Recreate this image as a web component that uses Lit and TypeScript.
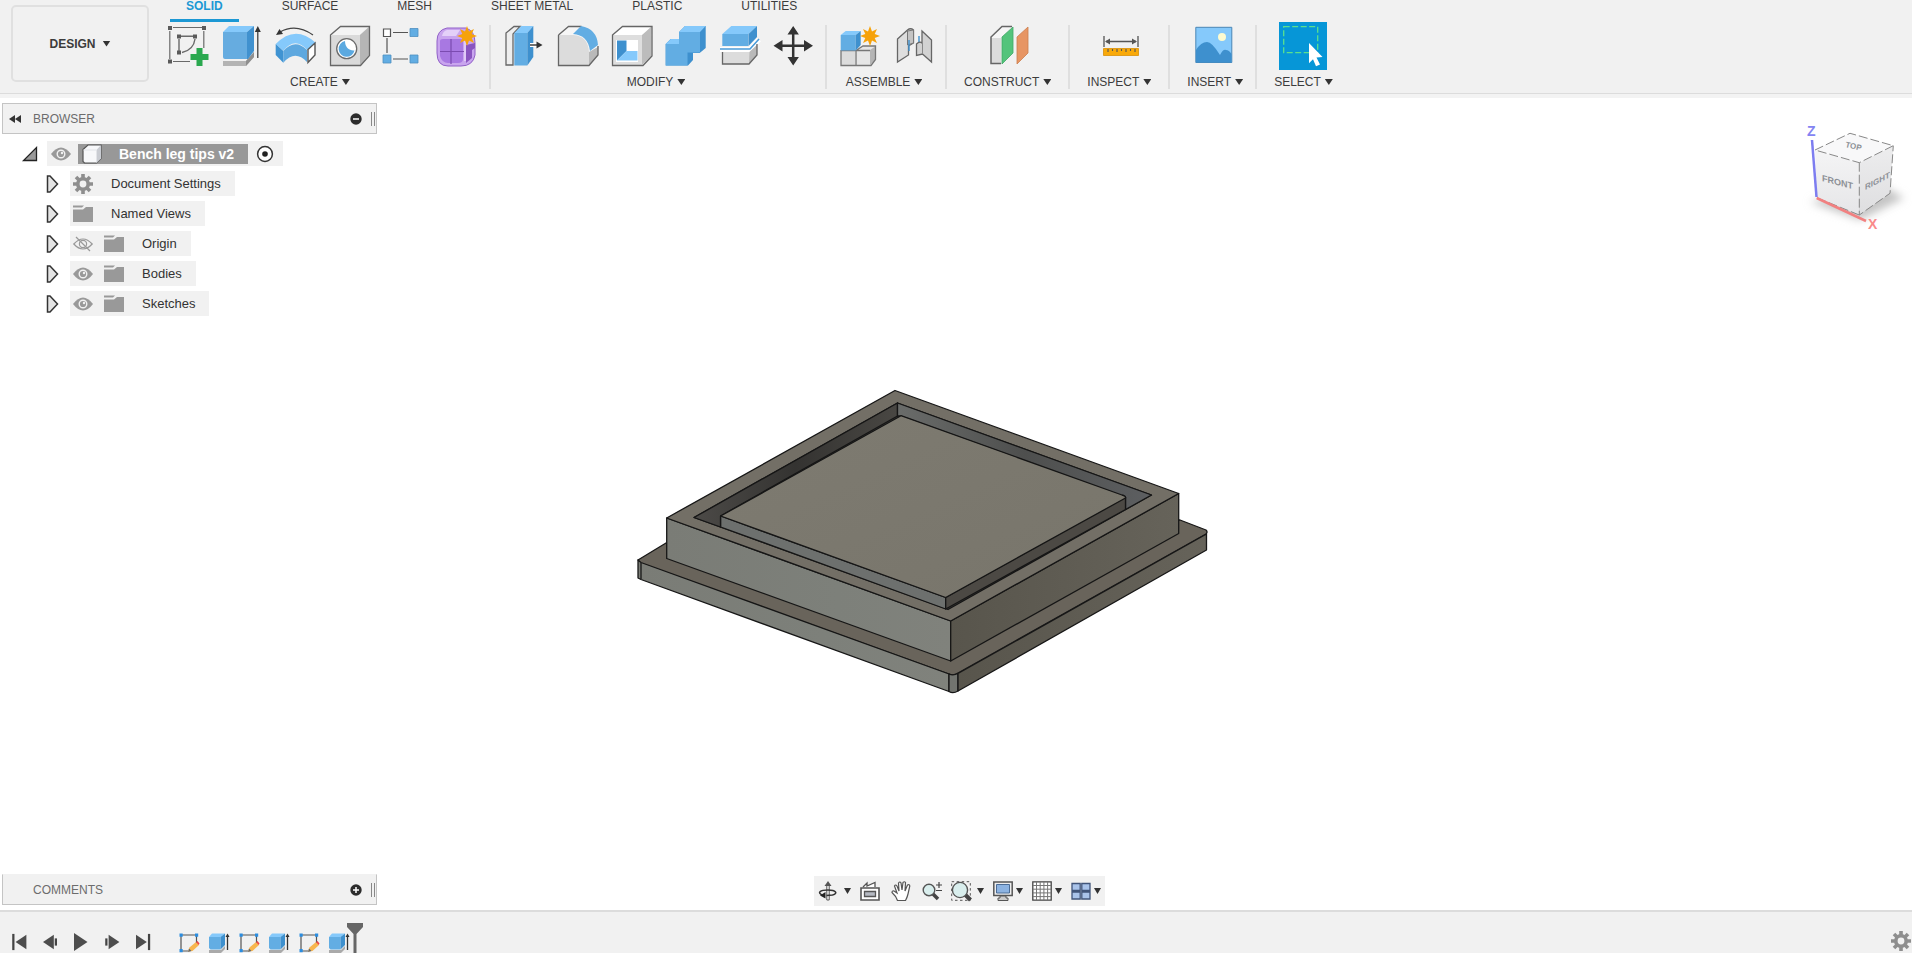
import { LitElement, html, svg, css, TemplateResult } from "lit";
import { customElement, property, state } from "lit/decorators.js";
import { classMap } from "lit/directives/class-map.js";

const STAR = "0,-10 2,-4.6 7,-7 4.7,-2 10,0 4.7,2 7,7 2,4.6 0,10 -2,4.6 -7,7 -4.7,2 -10,0 -4.7,-2 -7,-7 -2,-4.6";

/* 48 x 48 artwork for the ribbon commands */
const ribbonArt: Record<string, TemplateResult> = {
  sketch: svg`
    <path d="M9 5.5h29M5.8 9v28M39.8 9v17M9 39.5h17" stroke="#6a6a6a" stroke-width="1.2" fill="none"/>
    <path d="M17 14.3h12M15 17v12M31 17c-1 8-6 12-13 13.500" stroke="#6a6a6a" stroke-width="1.4" fill="none"/>
    <path d="M4 4h4v4h-4zM38 4h4v4h-4zM4 37.500h4v4h-4zM13 12.500h4v4h-4zM29 12.500h4v4h-4zM13 28.500h4v4h-4z" fill="#5a5a5a"/>
    <path d="M32.500 26h6v6h6v6h-6v6h-6v-6h-6v-6h6z" fill="#2aa84f"/>`,
  extrude: svg`
    <path d="M5 39h23l8-9v5l-8 9H5z" fill="#b4b4b4"/><path d="M28 39l8-9v5l-8 9z" fill="#8f8f8f"/>
    <path d="M5 10h24v27H7a2 2 0 0 1-2-2z" fill="#66ace0"/>
    <path d="M5 10l6-6h25l-7 6z" fill="#85c9fb"/><path d="M29 10l7-6v25l-6 8h-1z" fill="#4091cf"/>
    <path d="M39.800 8v28" stroke="#333" stroke-width="1.200"/><path d="M36.800 10l3-6 3 6z" fill="#333"/>`,
  revolve: svg`
    <path d="M3.700 22Q23 2 43.700 20.700L35.300 28Q23 14 11.300 28.700z" fill="#85c9fb"/>
    <path d="M3.700 22l7.600 7v11.700L3.700 33z" fill="#3f93d2"/>
    <path d="M11.300 29Q23 16 35 28v12Q23 27 11.300 40.700z" fill="#5ea8df"/>
    <path d="M36 27.500l7-6.500v12l-7 7.500z" fill="#fff" stroke="#555" stroke-width="1.400"/>
    <path d="M41 13Q24 1 8 10" fill="none" stroke="#444" stroke-width="1.300"/><path d="M4 13l3.500-6 3.500 5z" fill="#333"/>`,
  hole: svg`
    <path d="M4.500 15l10-10.500h29v29l-9 10H4.500z" fill="#dadada"/>
    <path d="M5 13l9.500-8.500H43L34 13z" fill="#f4f4f4"/><path d="M34 13l9-8v28l-9 10z" fill="#b5b5b5"/>
    <path d="M4.500 13l10-8.500h29v29l-9 10H4.500z" fill="none" stroke="#666" stroke-width="1.300"/>
    <circle cx="20.700" cy="26.700" r="10" fill="#fff" stroke="#6b6b6b" stroke-width="1.300"/>
    <path d="M19 19a8 8 0 1 0 9.500 9.500C23 29 19 25 19 19z" fill="#5ba9e0"/>`,
  pattern: svg`
    <path d="M13 10.500h15M7 16v15M13 37h15" stroke="#555" stroke-width="1.200"/>
    <path d="M3.500 7h7v7.500h-7z" fill="#fff" stroke="#555" stroke-width="1.200"/>
    <path d="M30 6.500h8v8h-8zM3 33h8v8H3zM30 33h8v8h-8z" fill="#62ade3" stroke="#4f8fc0" stroke-width=".8"/>`,
  form: svg`
    <path d="M13 6h19q9 3 9 15v12q-2 11-14 11H14Q3 44 3 31V19Q3 8 13 6z" fill="#c9a5ee" stroke="#9160c8"/>
    <path d="M32 23l9-2v5l-3 2v8l-6 5z" fill="#8a55c0"/>
    <path d="M6 19q0-2 3-2h17q3 0 3 3v17q0 4-5 4H14q-6 0-8-7z" fill="#a878e2"/>
    <path d="M17 17v25M6 29.500h24" fill="none" stroke="#7b4bb0" stroke-width="1.200"/>
    <path d="M31 19v20" stroke="#e0cbf7" stroke-width="2"/>
    <path d="M13 8h13l-4 6H8q1-5 5-6z" fill="#e4d0f8"/>
    <polygon points=${STAR} transform="translate(33 14)" fill="#f6a20a"/>`,
  press: svg`
    <path d="M6 11l8-6.500h6L13 12v31H6z" fill="#eee" stroke="#666" stroke-width="1.300"/>
    <path d="M14.300 11h13v32.500h-13z" fill="#62ade3"/><path d="M14.300 11l7-7h12l-6 7z" fill="#85c9fb"/>
    <path d="M27.300 11l6-7v31l-6 8.500z" fill="#3e90ce"/>
    <path d="M30 23h9" stroke="#fff" stroke-width="4"/><path d="M30 23h8" stroke="#333" stroke-width="1.400"/><path d="M36.500 19.500l6 3.500-6 3.500z" fill="#333"/>`,
  fillet: svg`
    <path d="M4.500 13l10-8.500h12Q42 8 44 25v8l-9 10.500H4.500z" fill="#f6f6f6"/>
    <path d="M4.500 13h15Q34 14 35 30v13.500H4.500z" fill="#dcdcdc"/><path d="M35 30l9-5v8l-9 10.500z" fill="#b9b9b9"/>
    <path d="M4.500 13l10-8.500h13M44 24v9l-9 10.500H4.500V13" fill="none" stroke="#666" stroke-width="1.300"/>
    <path d="M19 12l8-8Q43 7 44 23l-8 6Q34 13 19 12z" fill="#62ade3"/>`,
  shell: svg`
    <path d="M4.500 13l10-8.500H44V34l-9 9.500H4.500z" fill="#fff"/><path d="M34 13l9.500-8.500V34L34 43z" fill="#bcbcbc"/>
    <path d="M4.500 13H34v30H4.500z" fill="#dedede"/>
    <path d="M4.500 13l10-8.500H44V34l-9 9.500H4.500z" fill="none" stroke="#666" stroke-width="1.300"/>
    <path d="M8 18h22v22H8z" fill="#fff"/><path d="M9 18.500h9.500V29L9 38.500z" fill="#3e90ce"/><path d="M9 38.500l9.500-9.500h11v9.500z" fill="#85c9fb"/>`,
  combine: svg`
    <path d="M17 10l6-6h20.700v22l-6 5H31v7l-5 5.500H3.700V22l5-5H17z" fill="#3e90ce"/>
    <path d="M17 10h21v20.500H25.500v13H3.700V22H17z" fill="#62ade3"/>
    <path d="M17 10l6-6h20.700L38 10zM3.700 22l5-5H17v5z" fill="#85c9fb"/>`,
  split: svg`
    <path d="M6.300 12h26v12h-26z" fill="#62ade3"/><path d="M6.300 12l9-8H41l-8.500 8z" fill="#85c9fb"/><path d="M32.500 12L41 4v11l-8.500 9z" fill="#3e90ce"/>
    <path d="M4 27.500h30l9-10" fill="none" stroke="#fff" stroke-width="5"/><path d="M4 27h30l9-10" fill="none" stroke="#4a9bd8" stroke-width="1.600"/>
    <path d="M6.500 30h27l7.500-7v10l-8 9H6.500z" fill="#dcdcdc"/><path d="M33.500 30l7.500-7v10l-8 9z" fill="#b9b9b9"/>
    <path d="M6.500 30v12h26.500l8-9V22" fill="none" stroke="#666" stroke-width="1.300"/>`,
  move: svg`
    <path d="M23.200 8v31M8 23.700h31" stroke="#333" stroke-width="2.500"/>
    <path d="M17.500 12.500l5.700-8.500 5.700 8.500zM17.500 35l5.700 8.500 5.700-8.500zM12.500 18l-9 5.700 9 5.700zM34 18l9 5.700-9 5.700z" fill="#333"/>`,
  component: svg`
    <path d="M5 28h14v15.500H5z" fill="#dcdcdc"/><path d="M20 28l6-4h14v13l-5 6.500H20z" fill="#e6e6e6"/><path d="M34 28l6-4v13l-6 6z" fill="#b5b5b5"/>
    <path d="M5 28v15.500h30l4.500-6V24H27l-7 4.500v15M5 28.500h29" fill="none" stroke="#777" stroke-width="1.300"/>
    <path d="M4.700 13h15v15.500h-15z" fill="#62ade3"/><path d="M4.700 13l5-4h15l-5 4z" fill="#85c9fb"/><path d="M19.700 13l5-4v14l-5 5.500z" fill="#3e90ce"/>
    <polygon points=${STAR} transform="translate(34 14)" fill="#f6a20a"/>`,
  joint: svg`
    <path d="M7.500 17l10-9q3-2.500 6 0v13l-5 3v9L7.500 40z" fill="#dedede" stroke="#666" stroke-width="1.300"/>
    <path d="M17.500 9v14l6-2V8z" fill="#c4c4c4" stroke="#777"/>
    <path d="M19 18v11M29 14v9" stroke="#3e90ce" stroke-width="1.400"/>
    <path d="M32 9l9.500 9v22l-9-8-6 1.500V22q3-3 5.500-1z" fill="#d2d2d2" stroke="#666" stroke-width="1.300"/><path d="M32.500 21v11" stroke="#888"/>`,
  plane: svg`
    <path d="M7 16L18 4.500h10L17 15v26.500H7z" fill="#f6f6f6"/><path d="M7 16h10v25.500H7z" fill="#dcdcdc"/>
    <path d="M17 41.500H7V15L18 4.500h10" fill="none" stroke="#666" stroke-width="1.500"/>
    <path d="M18 15L29 5v26L18 42z" fill="#53c47b" stroke="#3fa865" stroke-width=".8"/><path d="M33 15L44 5v26L33 42z" fill="#e79563" stroke="#cc7e4e" stroke-width=".8"/>`,
  measure: svg`
    <path d="M9 14v11M43 14v11M11 19.500h30" stroke="#555" stroke-width="1.300"/><path d="M10 19.500l5-3v6zM42 19.500l-5-3v6z" fill="#555"/>
    <path d="M8.500 26.500h35v7h-35z" fill="#f9a909" stroke="#d98f06" stroke-width=".8"/>
    <path d="M13 27v3M17.500 27v2M22 27v3M26.500 27v2M31 27v3M35.500 27v2M40 27v3" stroke="#555" stroke-width="1.100"/>`,
  picture: svg`
    <path d="M4.800 5.300h36v35.200h-36z" fill="#85c9fb" stroke="#4a86b5"/><circle cx="31" cy="15" r="4" fill="#fdfbd0"/>
    <path d="M5 28q5-8 11-8 5 0 13 13 3-6 6-5 3 0 5.500 4v8.500H5z" fill="#3e90ce"/>`,
  select: svg`
    <path d="M0 0h48v48H0z" fill="#0696d7"/>
    <path d="M4.700 4.700h34v26h-34z" fill="none" stroke="#5be08e" stroke-width="1.300" stroke-dasharray="6 2.500"/>
    <path d="M30 21l13.500 14-6 .5 3.500 7-4 1.800-3-7-4 4z" fill="#fff"/>`,
};

/* 20 x 20 artwork for tree, navigation and timeline */
const smallArt: Record<string, TemplateResult> = {
  eye: svg`<path d="M0 10Q10-3 20 10 10 23 0 10z" fill="#999"/><circle cx="10" cy="10" r="3.800" fill="none" stroke="#f1f1f1" stroke-width="1.400"/><circle cx="11" cy="9" r="1.200" fill="#f1f1f1"/>`,
  eyeOff: svg`<path d="M.8 10Q10 0 19.200 10 10 20 .8 10z" fill="none" stroke="#999" stroke-width="1.200"/><circle cx="10" cy="10" r="3.600" fill="none" stroke="#999" stroke-width="1.200"/><path d="M3 3l14 14" stroke="#999" stroke-width="1.300"/>`,
  folder: svg`<path d="M0 3.500h9l2-2H0z" fill="#999"/><path d="M0 5.500h10l3-2.500h7v15H0z" fill="#999"/>`,
  gear: svg`<circle cx="10" cy="10" r="5.200" fill="none" stroke="#8e8e8e" stroke-width="3.600"/><path d="M10 0v4M10 16v4M0 10h4M16 10h4M3 3l3 3M14 14l3 3M17 3l-3 3M3 17l3-3" stroke="#8e8e8e" stroke-width="3.600"/>`,
  cube: svg`<path d="M1 5.500L6 1h13v13.500L14.500 19H2.500L1 17.500z" fill="#f7f8fa" stroke="#555" stroke-width="1.200"/><path d="M14.500 6L19 1v13.500L14.500 19z" fill="#c9ccd2"/><path d="M1.500 6h13v12.500" fill="none" stroke="#e2e4e8"/>`,
  target: svg`<circle cx="10" cy="10" r="7.400" fill="#fff" stroke="#333" stroke-width="1.500"/><circle cx="10" cy="10" r="2.800" fill="#222"/>`,
  open: svg`<path d="M3.500 16.500h13v-13z" fill="#999" stroke="#222" stroke-width="1.300"/>`,
  closed: svg`<path d="M5.500 2H8l7.500 8L8 18H5.500z" fill="#e4e4e4" stroke="#333" stroke-width="1.500"/>`,
  orbit: svg`<path d="M8.800 5v14h2.400V5" fill="#fff" stroke="#555" stroke-width="1"/><path d="M10 0l3.500 5h-7z" fill="#555"/><path d="M4 14C-1 11.500 2 9 10 9s10.500 3.500 4.500 5l-6 .5" fill="none" stroke="#333" stroke-width="1.500"/><path d="M2 14.500l5.500-3.500v6.500z" fill="#222"/>`,
  look: svg`<path d="M1 7h18v12H1z" fill="#fff" stroke="#555" stroke-width="1.600"/><path d="M4.500 10.500h11v5h-11z" fill="#b5b9c2" stroke="#555" stroke-width="1.300"/><path d="M3 6l4-4v3l8-3.500V6" fill="#fff" stroke="#555" stroke-width="1.300"/>`,
  hand: svg`<path d="M6.500 19.500Q5 15 1 11.500q0-2 2-1.500l3 2L3.500 5q1-2 2.500 0l2 5L7.500 2q1.500-2 2.500 0l1 7 1-7.500q1.500-1.500 2.500 0L14 10l2.500-6q2-1 2.300 1L17 13q-1 4-2.500 6.500z" fill="#fff" stroke="#555" stroke-width="1.200"/>`,
  zoom: svg`<path d="M10 12l6 6" stroke="#444" stroke-width="3.500"/><circle cx="7" cy="9" r="5.800" fill="#d9eeed" stroke="#555" stroke-width="1.400"/><path d="M14 4h6M17 1v6M14 9.500h6" stroke="#444" stroke-width="1.200"/>`,
  zoomWindow: svg`<path d="M.7.700h18.600v18.600H.7z" fill="none" stroke="#555" stroke-dasharray="2.500 2.500"/><path d="M14 13.500l5.500 5.500" stroke="#444" stroke-width="4"/><circle cx="9" cy="9" r="7.600" fill="#d9eeed" stroke="#555" stroke-width="1.400"/>`,
  display: svg`<path d="M0.800 1h18.400v13.500H.8z" fill="#eee" stroke="#555" stroke-width="1.500"/><path d="M3.500 3.500h13v8.500h-13z" fill="#8cb3e2" stroke="#4b6c96"/><path d="M7 15h6v2h2v2.500H5V17h2z" fill="#ccc" stroke="#555"/>`,
  grid: svg`<path d="M.8.800h18.400v18.400H.8z" fill="#fff" stroke="#444" stroke-width="1.300"/><path d="M4.500 1v18M8.200 1v18M11.900 1v18M15.600 1v18M1 4.500h18M1 8.200h18M1 11.900h18M1 15.600h18" stroke="#777" stroke-width="1"/>`,
  views: svg`<path d="M1 2.500h8.200v7H1zM10.800 2.500H19v7h-8.200zM1 11h8.200v7H1zM10.800 11H19v7h-8.200z" fill="#a9c3ea" stroke="#41557a" stroke-width="1.300"/>`,
  first: svg`<path d="M1.500 1v18" stroke="#444" stroke-width="2.500"/><path d="M16 2v16L4 10z" fill="#4d4d4d"/>`,
  back: svg`<path d="M12 2v16L0 10z" fill="#4d4d4d"/><path d="M14.300 6v8" stroke="#444" stroke-width="2.500"/>`,
  play: svg`<path d="M0 0v20l15-10z" fill="#4d4d4d"/>`,
  forward: svg`<path d="M4 2v16l12-8z" fill="#4d4d4d"/><path d="M1.500 6v8" stroke="#444" stroke-width="2.500"/>`,
  last: svg`<path d="M14.500 1v18" stroke="#444" stroke-width="2.500"/><path d="M0 2v16l12-8z" fill="#4d4d4d"/>`,
  tlSketch: svg`<path d="M3 2h14M2 3v14M17.500 3v8M3 18h6" stroke="#555" stroke-width="1.200"/><path d="M.5.500h3.200v3.200H.5zM16 .500h3.200v3.200H16zM.5 16h3.200v3.200H.5z" fill="#2b8de0"/><path d="M9 18.500l1.500-4L17 9l3 3-6.500 6z" fill="#f7b64e"/><path d="M17 9l1.500-1 2 2.500-1 1.500z" fill="#ee4444"/><path d="M9 19l1-3.500 2.500 2.500z" fill="#666"/>`,
  tlExtrude: svg`<path d="M0 17h12l4-4v3l-4 4H0z" fill="#aaa"/><path d="M0 4h11.500v12.500H1.500L0 15z" fill="#62ade3"/><path d="M0 4l3-3.500h13L11.500 4z" fill="#85c9fb"/><path d="M11.500 4L16 .5V12l-4.500 4.500z" fill="#3e90ce"/><path d="M18.500 3v14" stroke="#333" stroke-width="1.300"/><path d="M16.500 4l2-3.500 2 3.500z" fill="#333"/>`,
};

const small = (name: string) => html`<svg class="small" viewBox="0 0 20 20" aria-hidden="true">${smallArt[name]}</svg>`;

interface Group { label: string; icons: string[]; kind: string; }

const GROUPS: Group[] = [
  { label: "CREATE", icons: ["sketch", "extrude", "revolve", "hole", "pattern", "form"], kind: "wide" },
  { label: "MODIFY", icons: ["press", "fillet", "shell", "combine", "split", "move"], kind: "wide" },
  { label: "ASSEMBLE", icons: ["component", "joint"], kind: "wide" },
  { label: "CONSTRUCT", icons: ["plane"], kind: "single" },
  { label: "INSPECT", icons: ["measure"], kind: "single" },
  { label: "INSERT", icons: ["picture"], kind: "single snug" },
  { label: "SELECT", icons: ["select"], kind: "single final" },
];

const TABS = ["SOLID", "SURFACE", "MESH", "SHEET METAL", "PLASTIC", "UTILITIES"];

const shared = css`
  :host, * { box-sizing: border-box; }
  button {
    font: inherit; color: inherit; background: none; border: 0; padding: 0; margin: 0;
    display: flex; align-items: center; cursor: pointer;
  }
  svg { display: block; flex: none; overflow: visible; }
  .small { width: 20px; height: 20px; }
  .caret {
    width: 8px; height: 6px; flex: none; background: #333;
    clip-path: polygon(0 0, 100% 0, 50% 100%);
  }
`;

@customElement("cad-ribbon")
export class CadRibbon extends LitElement {
  @state() private tab = "SOLID";

  static styles = [shared, css`
    :host {
      display: flex; height: 98px; background: #f1f1f1; color: #3c3c3c;
      font-size: 12px; line-height: 14px; overflow: hidden;
      box-shadow: inset 0 -4px #f3f3f3, inset 0 -5px #dcdcdc;
    }
    .workspace {
      flex: none; width: 138px; height: 77px; margin: 5px 0 0 11px; justify-content: center; gap: 7px;
      border: 2px solid #e0e0e0; border-radius: 5px; font-weight: bold;
    }
    .main { margin-left: 6px; }
    .tabs { display: flex; gap: 27px; padding-left: 15px; height: 22px; }
    .tab { padding: 0 16px 8px; height: 22px; white-space: nowrap; border-bottom: 3px solid transparent; }
    .tab.active { font-weight: bold; color: #1c98d4; border-color: #1c98d4; }
    .groups { display: flex; }
    .group {
      display: flex; flex-direction: column; align-items: center; position: relative;
      padding: 0 6px 0 6px; gap: 5px;
    }
    .group::after { content: ""; position: absolute; right: 0; top: 3px; width: 2px; height: 64px; background: #dfdfdf; }
    .icons { display: flex; }
    .command { padding: 0 3px; }
    .command svg { width: 48px; height: 48px; }
    .single { padding: 0 19px 0 17px; }
    .snug { padding-right: 14px; }
    .final::after { display: none; }
    .label { gap: 4px; white-space: nowrap; }
    .wide .label { padding-right: 6px; }
  `];

  render() {
    return html`
      <button class="workspace">DESIGN <span class="caret"></span></button>
      <div class="main">
        <nav class="tabs">
          ${TABS.map((t) => html`<button class=${classMap({ tab: true, active: t === this.tab })}
            @click=${() => (this.tab = t)}>${t}</button>`)}
        </nav>
        <div class="groups">
          ${GROUPS.map((g) => html`
            <section class="group ${g.kind}">
              <div class="icons">
                ${g.icons.map((i) => html`<button class="command" aria-label=${i}>
                  <svg viewBox="0 0 48 48">${ribbonArt[i]}</svg></button>`)}
              </div>
              <button class="label">${g.label}<span class="caret"></span></button>
            </section>`)}
        </div>
      </div>`;
  }
}

@customElement("cad-panel-bar")
export class CadPanelBar extends LitElement {
  @property() label = "";
  @property({ type: Boolean }) expanded = false;

  static styles = [shared, css`
    :host {
      display: flex; align-items: center; height: 31px; padding: 0 1px 0 5px; background: #f1f1f1;
      border: 1px solid #c4c4c4; color: #6c6c6c; font-size: 12px; line-height: 14px;
    }
    :host(:not([expanded])) { border-top-color: #f1f1f1; }
    .rewind { width: 14px; height: 10px; }
    .rewind svg { width: 14px; height: 10px; }
    .title { flex: 1; padding-left: 11px; }
    .toggle svg { width: 12px; height: 12px; }
    .grip { width: 4px; height: 14px; margin-left: 9px; border: solid #888; border-width: 0 1px; }
  `];

  render() {
    return html`
      <button class="rewind" aria-label="Collapse">
        ${this.expanded ? html`<svg viewBox="0 0 14 10"><path d="M7 1v8L1 5zM13 1v8L7 5z" fill="#333"/></svg>` : ""}
      </button>
      <span class="title">${this.label}</span>
      <button class="toggle" aria-label="Toggle">
        <svg viewBox="0 0 12 12"><circle cx="6" cy="6" r="5.700" fill="#2c2c2c"/>
          <path d=${this.expanded ? "M3 6h6" : "M3 6h6M6 3v6"} stroke="#fff" stroke-width="1.500"/></svg>
      </button>
      <span class="grip"></span>`;
  }
}

interface Node { label: string; icons: string[]; }

const NODES: Node[] = [
  { label: "Document Settings", icons: ["gear"] },
  { label: "Named Views", icons: ["folder"] },
  { label: "Origin", icons: ["eyeOff", "folder"] },
  { label: "Bodies", icons: ["eye", "folder"] },
  { label: "Sketches", icons: ["eye", "folder"] },
];

@customElement("cad-browser")
export class CadBrowser extends LitElement {
  static styles = [shared, css`
    :host { display: block; }
    .tree { list-style: none; margin: 7px 0 0; padding: 0; display: grid; gap: 5px; font-size: 13px; line-height: 16px; color: #333; }
    .row { display: flex; align-items: center; height: 25px; padding-left: 40px; gap: 8px; }
    .row.root { padding-left: 18px; gap: 7px; }
    .item { display: flex; align-items: center; height: 25px; gap: 11px; padding: 0 14px 0 3px; background: #f1f1f1; }
    .root .item { padding: 0 8px 0 4px; gap: 7px; }
    .name { padding-left: 7px; }
    .chosen { height: 20px; padding: 0 14px 0 4px; gap: 10px; background: #989898; color: #fff; font-weight: bold; font-size: 14px; }
  `];

  render() {
    return html`
      <cad-panel-bar label="BROWSER" expanded></cad-panel-bar>
      <ul class="tree">
        <li class="row root">
          <button aria-label="Collapse">${small("open")}</button>
          <div class="item">
            <button aria-label="Visibility">${small("eye")}</button>
            <button class="chosen">${small("cube")}<span class="name">Bench leg tips v2</span></button>
            <button aria-label="Activate">${small("target")}</button>
          </div>
        </li>
        ${NODES.map((n) => html`
          <li class="row">
            <button aria-label="Expand">${small("closed")}</button>
            <div class="item">${n.icons.map((i) => small(i))}<span class="name">${n.label}</span></div>
          </li>`)}
      </ul>`;
  }
}

const NAV: { icon: string; menu: string }[] = [
  { icon: "orbit", menu: "far" },
  { icon: "look", menu: "" },
  { icon: "hand", menu: "" },
  { icon: "zoom", menu: "" },
  { icon: "zoomWindow", menu: "far" },
  { icon: "display", menu: "near" },
  { icon: "grid", menu: "near" },
  { icon: "views", menu: "near" },
];

@customElement("cad-viewport")
export class CadViewport extends LitElement {
  static styles = [shared, css`
    :host { display: flex; position: relative; min-height: 0; background: #fff; overflow: hidden; }
    .side { display: flex; flex-direction: column; justify-content: space-between; width: 375px; margin: 5px 0 5px 2px; }
    .model { position: absolute; left: calc(50% - 326px); top: 283px; width: 590px; height: 320px; }
    .viewcube { position: absolute; right: 2px; top: 20px; width: 110px; height: 114px; }
    .navbar {
      position: absolute; left: calc(50% - 142px); bottom: 4px; height: 30px; padding: 0 4px;
      display: flex; align-items: center; gap: 9px; background: #f1f1f1;
    }
    .hand { padding: 0 2px; }
    .far { gap: 6px; }
    .near { gap: 3px; }
    .navbar .caret { width: 7px; }
    .face { font: bold 9px "Liberation Sans", Arial, sans-serif; fill: #8c9096; }
    .face.side-face { font-size: 8px; }
    .axis { font: bold 14px "Liberation Sans", Arial, sans-serif; }
  `];

  private model() {
    return html`
      <svg class="model" viewBox="630 380 590 320" role="img" aria-label="Bench leg tip">
        <defs>
          <linearGradient id="front" x1="0" y1="0" x2="1" y2="0"><stop offset="0" stop-color="#7a7c76"/><stop offset=".6" stop-color="#7d807a"/><stop offset="1" stop-color="#80827c"/></linearGradient>
          <linearGradient id="right" x1="0" y1="0" x2="1" y2="0"><stop offset="0" stop-color="#58554c"/><stop offset="1" stop-color="#66635a"/></linearGradient>
          <linearGradient id="top" x1="0" y1="0" x2="1" y2="1"><stop offset="0" stop-color="#7e7b71"/><stop offset="1" stop-color="#78756b"/></linearGradient>
          <linearGradient id="wall" x1="0" y1="0" x2="1" y2="0"><stop offset="0" stop-color="#4c4a47"/><stop offset=".5" stop-color="#343331"/><stop offset="1" stop-color="#494743"/></linearGradient>
          <linearGradient id="back" x1="0" y1="0" x2="1" y2="0"><stop offset="0" stop-color="#6a6c6a"/><stop offset=".5" stop-color="#4e4f4e"/><stop offset="1" stop-color="#5d5f61"/></linearGradient>
        </defs>
        <g stroke="#161616" stroke-width="1.300" stroke-linejoin="round">
          <path d="M638 559L666 542 1180 519 1206 529Q1208 531 1206 533L958 672Q953 675 949 673L640 562z" fill="#69645b"/>
          <path d="M638 559L641 561.500 949 673V690.500L641 578.500 638 577z" fill="url(#front)"/>
          <path d="M949 673Q953 675 958 672.500V690Q953 693 949 690.500z" fill="#72746f"/>
          <path d="M958 672.500L1206.500 533V549L958 690z" fill="url(#right)"/>
          <path d="M641 562V578" fill="none"/>
          <path d="M666.700 517L950.700 620V660L666.700 557.500z" fill="url(#front)"/>
          <path d="M950.700 620L1178.700 492.500V532.500L950.700 660z" fill="url(#right)"/>
          <path d="M895 389.500L1178.700 492.500 950.700 620 666.700 517z" fill="#736f66"/>
          <path d="M897.500 402L1151.500 494 948 608.500 694 516.500z" fill="#3b3a37"/>
          <path d="M897.500 402V415L720.500 515V526L694 516.500z" fill="url(#wall)"/>
          <path d="M897.500 402L1151.500 494 1125.500 508.500V496L901 415H897.500z" fill="url(#back)"/>
          <path d="M720.700 515L945.700 596.500V608L720.700 526z" fill="#6d706e"/>
          <path d="M945.700 596.500L1125.500 496V508.500L945.700 608z" fill="#4c4944"/>
          <path d="M901 414.700L1122 494Q1126 495 1125.500 497L945.700 596.500 720.700 515z" fill="url(#top)"/>
        </g>
      </svg>`;
  }

  private viewcube() {
    return html`
      <svg class="viewcube" viewBox="0 0 110 114" role="img" aria-label="View cube">
        <defs>
          <filter id="soft" x="-20%" y="-20%" width="140%" height="140%"><feGaussianBlur stdDeviation="4"/></filter>
          <linearGradient id="cf" x1="0" y1="0" x2="0" y2="1"><stop offset="0" stop-color="#f4f4f5"/><stop offset="1" stop-color="#e6e6e8"/></linearGradient>
          <linearGradient id="cr" x1="0" y1="0" x2="0" y2="1"><stop offset="0" stop-color="#ededee"/><stop offset="1" stop-color="#dedee0"/></linearGradient>
        </defs>
        <path d="M10 84L60 102 104 80 80 66z" fill="#c4c4c4" filter="url(#soft)"/>
        <path d="M15 32L59.300 44.700V97L16.700 79.700z" fill="url(#cf)"/>
        <path d="M59.300 44.700L93.300 27.700 90 75.300 59.300 97z" fill="url(#cr)"/>
        <path d="M15 32L50 15.300 93.300 27.700 59.300 44.700z" fill="#f8f8f9"/>
        <path d="M15 32L50 15.300 93.300 27.700 59.300 44.700zM59.300 44.700V97L90 75.300 93.300 27.700M59.300 97L16.700 79.700" fill="none" stroke="#888" stroke-width="1" stroke-dasharray="9 3"/>
        <path d="M12 22L16.500 79" stroke="#7d7df0" stroke-width="2.500"/><path d="M16.700 80L66 103" stroke="#f28080" stroke-width="2.500"/>
        <text class="axis" x="7" y="18" fill="#8484f2">Z</text><text class="axis" x="68" y="111" fill="#f98a8a">X</text>
        <text class="face" transform="translate(22 63) skewY(15)">FRONT</text>
        <text class="face side-face" transform="translate(65 72) skewY(-27)">RIGHT</text>
        <text class="face side-face" transform="translate(45 29) rotate(13)">TOP</text>
      </svg>`;
  }

  render() {
    return html`
      ${this.model()}
      <div class="side">
        <cad-browser></cad-browser>
        <cad-panel-bar label="COMMENTS"></cad-panel-bar>
      </div>
      ${this.viewcube()}
      <div class="navbar">
        ${NAV.map((n) => html`<button class="${n.icon} ${n.menu}" aria-label=${n.icon}>
          ${small(n.icon)}${n.menu ? html`<span class="caret"></span>` : ""}</button>`)}
      </div>`;
  }
}

@customElement("cad-timeline")
export class CadTimeline extends LitElement {
  static styles = [shared, css`
    :host { display: flex; align-items: flex-start; height: 43px; padding: 19px 1px 0 11px; background: #f1f1f1; border-top: 2px solid #dcdcdc; overflow: hidden; }
    .controls { display: flex; gap: 11px; }
    .controls svg { height: 18px; margin: 2px 0 0; }
    .features { display: flex; gap: 10px; margin-left: 24px; flex: 1; }
    .marker { width: 16px; height: 32px; margin: -8px 0 0 -12px; }
  `];

  render() {
    return html`
      <div class="controls">
        ${["first", "back", "play", "forward", "last"].map((c) => html`<button aria-label=${c}>${small(c)}</button>`)}
      </div>
      <div class="features">
        ${[0, 1, 2].map(() => html`<button aria-label="Sketch">${small("tlSketch")}</button><button aria-label="Extrude">${small("tlExtrude")}</button>`)}
        <svg class="marker" viewBox="0 0 16 32"><path d="M0 0h16v4L9.500 11v21h-3V11L0 4z" fill="#666"/></svg>
      </div>
      <button aria-label="Settings">${small("gear")}</button>`;
  }
}

@customElement("app-root")
export class AppRoot extends LitElement {
  static styles = css`
    :host {
      display: grid; grid-template-rows: auto 1fr auto; grid-template-columns: minmax(0, 1fr);
      height: 100vh; font-family: "Liberation Sans", Arial, sans-serif; background: #fff;
    }
  `;

  render() {
    return html`<cad-ribbon></cad-ribbon><cad-viewport></cad-viewport><cad-timeline></cad-timeline>`;
  }
}
